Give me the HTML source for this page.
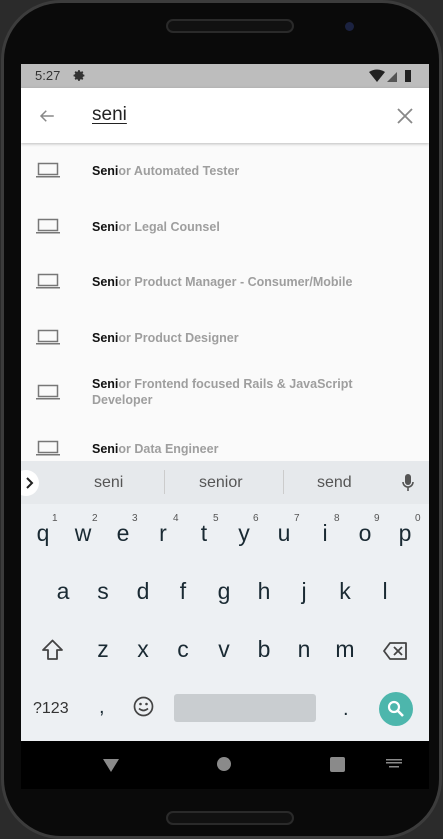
<!DOCTYPE html>
<html><head><style>
*{margin:0;padding:0;box-sizing:border-box}
body{width:443px;height:839px;background:#2b2b2b;position:relative;overflow:hidden;font-family:"Liberation Sans",sans-serif}
.phone{position:absolute;left:1px;top:0;width:441px;height:839px;background:#0a0a0a;border-radius:60px;border:3px solid #3c3c3c}
.speaker{position:absolute;left:162px;top:16px;width:128px;height:14px;border-radius:7px;background:#111;border:2px solid #2a2a2a}
.speaker2{position:absolute;left:162px;top:808px;width:128px;height:14px;border-radius:7px;background:#111;border:2px solid #2a2a2a}
.cam{position:absolute;left:341px;top:19px;width:9px;height:9px;border-radius:50%;background:#1b2240}
.screen{position:absolute;left:21px;top:64px;width:408px;height:725px;background:#000;overflow:hidden}
.status{height:24px;background:#bdbdbd;position:relative;font-size:13px;color:#333}
.appbar{height:55px;background:#fff;position:relative;box-shadow:0 1px 3px rgba(0,0,0,.25);z-index:2}
.list{height:318px;background:#fafafa;position:relative}
.row{position:absolute;left:0;width:408px}
.row svg{position:absolute;left:15px}
.row .t{position:absolute;left:71px;font-size:12.5px;font-weight:bold;color:#9e9e9e;line-height:16px;width:300px}
.row b{color:#111}
.sugg{height:43px;background:#e6e9ec;position:relative;font-size:16px;color:#555}
.kb{height:237px;background:#edf0f3;position:relative;color:#1a2a33}
.k{position:absolute;width:40px;text-align:center;font-size:23px}
.n{position:absolute;font-size:10px;color:#555}
.nav{height:48px;background:#000;position:relative}
</style></head><body>
<div class="phone"><div class="speaker"></div><div class="cam"></div><div class="speaker2"></div></div>
<div class="screen">
 <div class="status"><span style="position:absolute;left:14px;top:4px">5:27</span>
  <svg style="position:absolute;left:52px;top:5px" width="13" height="13" viewBox="0 0 24 24"><path fill="#333" d="M12 8a4 4 0 100 8 4 4 0 000-8zm9 5.5v-3l-2.5-.5-.8-1.9 1.4-2.1-2.1-2.1-2.1 1.4-1.9-.8L12.5 2h-3L9 4.5l-1.9.8L5 3.9 2.9 6l1.4 2.1-.8 1.9L1 10.5v3l2.5.5.8 1.9L2.9 18 5 20.1l2.1-1.4 1.9.8.5 2.5h3l.5-2.5 1.9-.8 2.1 1.4 2.1-2.1-1.4-2.1.8-1.9z"/></svg>
  <svg style="position:absolute;left:348px;top:5px" width="50" height="14" viewBox="0 0 50 14"><path fill="#222" d="M0 3Q8-2 16 3L8 13z"/><path fill="#555" d="M18 13L28 3V13z"/><rect x="36" y="1" width="6" height="12" fill="#222"/></svg>
 </div>
 <div class="appbar">
  <svg style="position:absolute;left:17px;top:19px" width="18" height="18" viewBox="0 0 24 24"><path fill="none" stroke="#888" stroke-width="2" d="M21 12H4M11 5l-7 7 7 7"/></svg>
  <span style="position:absolute;left:71px;top:16px;font-size:19px;color:#222;text-decoration:underline;text-underline-offset:3px;text-decoration-thickness:1px">seni</span>
  <svg style="position:absolute;left:376px;top:20px" width="16" height="16" viewBox="0 0 16 16"><path stroke="#888" stroke-width="1.8" d="M1 1L15 15M15 1L1 15"/></svg>
 </div>
 <div class="list">
  <div class="row" style="top:19px"><svg width="24" height="16" viewBox="0 0 24 16"><rect x="2.5" y="1.5" width="19" height="11" fill="none" stroke="#777" stroke-width="1.5"/><rect x="0" y="14" width="24" height="1.5" fill="#777"/></svg><div class="t" style="top:1px"><b>Seni</b>or Automated Tester</div></div>
  <div class="row" style="top:75px"><svg width="24" height="16" viewBox="0 0 24 16"><rect x="2.5" y="1.5" width="19" height="11" fill="none" stroke="#777" stroke-width="1.5"/><rect x="0" y="14" width="24" height="1.5" fill="#777"/></svg><div class="t" style="top:1px"><b>Seni</b>or Legal Counsel</div></div>
  <div class="row" style="top:130px"><svg width="24" height="16" viewBox="0 0 24 16"><rect x="2.5" y="1.5" width="19" height="11" fill="none" stroke="#777" stroke-width="1.5"/><rect x="0" y="14" width="24" height="1.5" fill="#777"/></svg><div class="t" style="top:1px"><b>Seni</b>or Product Manager - Consumer/Mobile</div></div>
  <div class="row" style="top:186px"><svg width="24" height="16" viewBox="0 0 24 16"><rect x="2.5" y="1.5" width="19" height="11" fill="none" stroke="#777" stroke-width="1.5"/><rect x="0" y="14" width="24" height="1.5" fill="#777"/></svg><div class="t" style="top:1px"><b>Seni</b>or Product Designer</div></div>
  <div class="row" style="top:241px"><svg width="24" height="16" viewBox="0 0 24 16"><rect x="2.5" y="1.5" width="19" height="11" fill="none" stroke="#777" stroke-width="1.5"/><rect x="0" y="14" width="24" height="1.5" fill="#777"/></svg><div class="t" style="top:-8px"><b>Seni</b>or Frontend focused Rails &amp; JavaScript Developer</div></div>
  <div class="row" style="top:297px"><svg width="24" height="16" viewBox="0 0 24 16"><rect x="2.5" y="1.5" width="19" height="11" fill="none" stroke="#777" stroke-width="1.5"/><rect x="0" y="14" width="24" height="1.5" fill="#777"/></svg><div class="t" style="top:1px"><b>Seni</b>or Data Engineer</div></div>
 </div>
 <div class="sugg">
  <div style="position:absolute;left:-8px;top:9px;width:26px;height:26px;border-radius:13px;background:#fff"></div>
  <svg style="position:absolute;left:5px;top:16px" width="8" height="12" viewBox="0 0 8 12"><path d="M1 1l5 5-5 5" fill="none" stroke="#222" stroke-width="2"/></svg>
  <span style="position:absolute;left:73px;top:13px">seni</span>
  <div style="position:absolute;left:143px;top:9px;width:1px;height:24px;background:#ccc"></div>
  <span style="position:absolute;left:178px;top:13px">senior</span>
  <div style="position:absolute;left:262px;top:9px;width:1px;height:24px;background:#ccc"></div>
  <span style="position:absolute;left:296px;top:13px">send</span>
  <svg style="position:absolute;left:381px;top:13px" width="12" height="18" viewBox="0 0 12 18"><rect x="3" y="0" width="6" height="11" rx="3" fill="#555"/><path d="M1 8a5 5 0 0010 0M6 13v4" fill="none" stroke="#555" stroke-width="1.6"/></svg>
 </div>
 <div class="kb">
  <div class="k" style="left:2px;top:16px">q</div><div class="k" style="left:42px;top:16px">w</div><div class="k" style="left:82px;top:16px">e</div><div class="k" style="left:122px;top:16px">r</div><div class="k" style="left:163px;top:16px">t</div><div class="k" style="left:203px;top:16px">y</div><div class="k" style="left:243px;top:16px">u</div><div class="k" style="left:284px;top:16px">i</div><div class="k" style="left:324px;top:16px">o</div><div class="k" style="left:364px;top:16px">p</div>
  <div class="n" style="left:31px;top:9px">1</div><div class="n" style="left:71px;top:9px">2</div><div class="n" style="left:111px;top:9px">3</div><div class="n" style="left:152px;top:9px">4</div><div class="n" style="left:192px;top:9px">5</div><div class="n" style="left:232px;top:9px">6</div><div class="n" style="left:273px;top:9px">7</div><div class="n" style="left:313px;top:9px">8</div><div class="n" style="left:353px;top:9px">9</div><div class="n" style="left:394px;top:9px">0</div>
  <div class="k" style="left:22px;top:74px">a</div><div class="k" style="left:62px;top:74px">s</div><div class="k" style="left:102px;top:74px">d</div><div class="k" style="left:142px;top:74px">f</div><div class="k" style="left:183px;top:74px">g</div><div class="k" style="left:223px;top:74px">h</div><div class="k" style="left:263px;top:74px">j</div><div class="k" style="left:304px;top:74px">k</div><div class="k" style="left:344px;top:74px">l</div>
  <svg style="position:absolute;left:20px;top:135px" width="23" height="22" viewBox="0 0 23 22"><path d="M11.5 1.5L2 11h5v9h9v-9h5z" fill="none" stroke="#444" stroke-width="1.8" stroke-linejoin="round"/></svg>
  <div class="k" style="left:62px;top:132px">z</div><div class="k" style="left:102px;top:132px">x</div><div class="k" style="left:142px;top:132px">c</div><div class="k" style="left:183px;top:132px">v</div><div class="k" style="left:223px;top:132px">b</div><div class="k" style="left:263px;top:132px">n</div><div class="k" style="left:304px;top:132px">m</div>
  <svg style="position:absolute;left:362px;top:138px" width="25" height="18" viewBox="0 0 25 18"><path d="M7 1h16v16H7L1 9z" fill="none" stroke="#444" stroke-width="1.8" stroke-linejoin="round"/><path d="M11 5l8 8M19 5l-8 8" stroke="#444" stroke-width="1.8"/></svg>
  <span style="position:absolute;left:12px;top:196px;font-size:16px;color:#333">?123</span>
  <span style="position:absolute;left:78px;top:192px;font-size:20px">,</span>
  <svg style="position:absolute;left:112px;top:192px" width="21" height="21" viewBox="0 0 21 21"><circle cx="10.5" cy="10.5" r="9" fill="none" stroke="#444" stroke-width="1.7"/><circle cx="7.5" cy="8" r="1.3" fill="#444"/><circle cx="13.5" cy="8" r="1.3" fill="#444"/><path d="M6 12.5q4.5 4 9 0" fill="none" stroke="#444" stroke-width="1.6"/></svg>
  <div style="position:absolute;left:153px;top:190px;width:142px;height:28px;background:#c9cdd0;border-radius:3px"></div>
  <span style="position:absolute;left:322px;top:194px;font-size:20px">.</span>
  <div style="position:absolute;left:358px;top:188px;width:34px;height:34px;border-radius:17px;background:#4db6ac"></div>
  <svg style="position:absolute;left:366px;top:196px" width="18" height="18" viewBox="0 0 18 18"><circle cx="7" cy="7" r="5" fill="none" stroke="#fff" stroke-width="2.2"/><path d="M10.5 10.5L16 16" stroke="#fff" stroke-width="2.6"/></svg>
 </div>
 <div class="nav">
  <svg style="position:absolute;left:82px;top:18px" width="16" height="13" viewBox="0 0 16 13"><path d="M0 0h16L8 13z" fill="#8a8a8a"/></svg>
  <div style="position:absolute;left:196px;top:16px;width:14px;height:14px;border-radius:7px;background:#8a8a8a"></div>
  <div style="position:absolute;left:309px;top:16px;width:15px;height:15px;border-radius:2px;background:#8a8a8a"></div>
  <svg style="position:absolute;left:365px;top:18px" width="16" height="10" viewBox="0 0 16 10"><g fill="#8a8a8a"><rect x="0" y="0" width="16" height="1.5"/><rect x="0" y="3" width="16" height="1.5"/><rect x="3" y="7" width="10" height="1.5"/></g></svg>
 </div>
</div>
</body></html>
